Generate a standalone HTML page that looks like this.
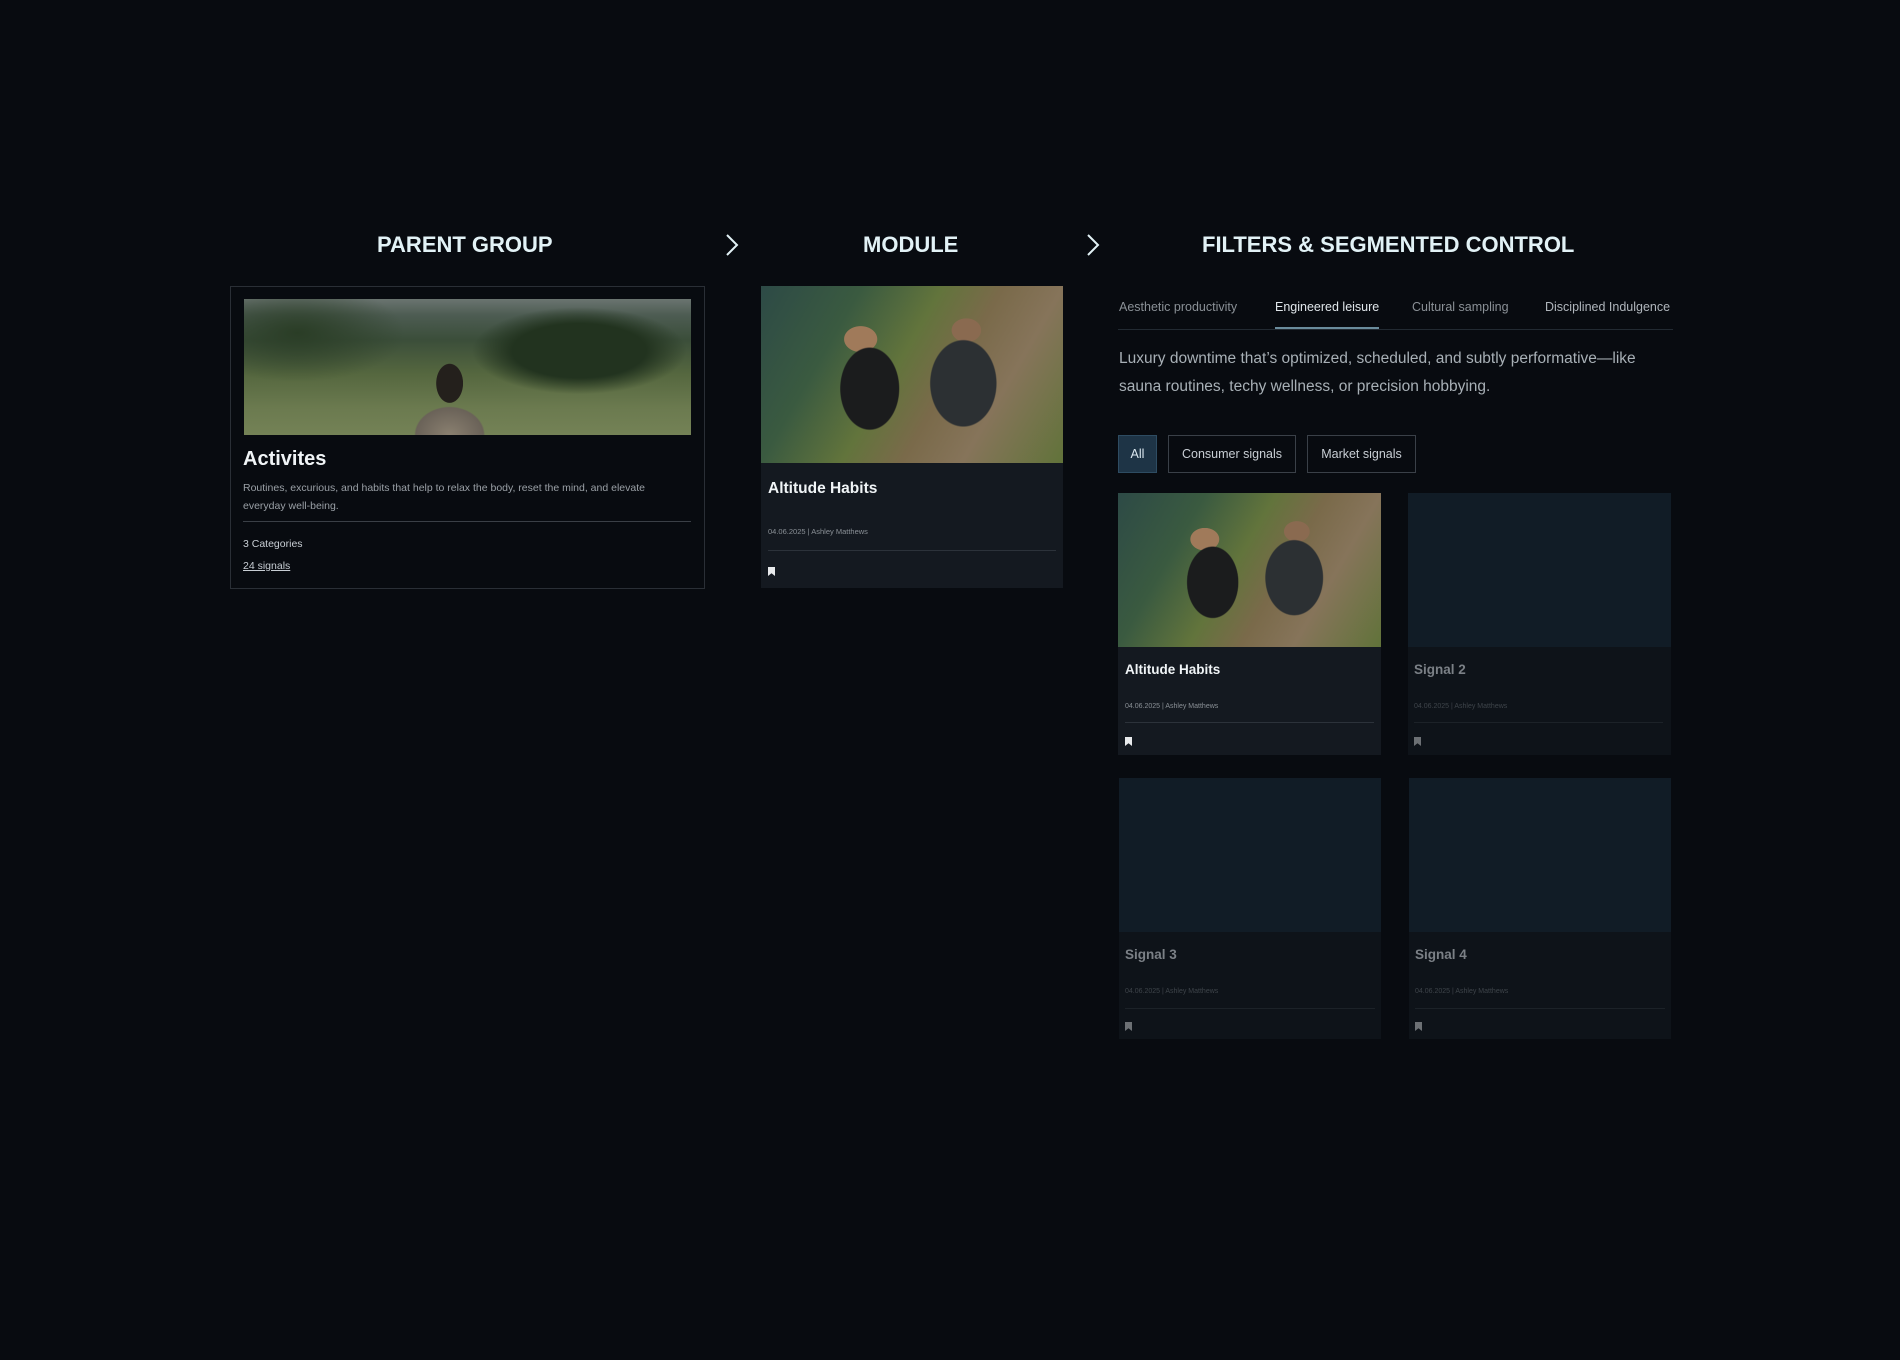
<!DOCTYPE html>
<html><head><meta charset="utf-8"><style>
*{margin:0;padding:0;box-sizing:border-box}
body{width:1900px;height:1360px;background:#080b10;font-family:"Liberation Sans",sans-serif;position:relative;overflow:hidden;color:#e4eef2}
.a{position:absolute}
.h{font-weight:700;font-size:22px;color:#e2f2f6;top:232px;white-space:nowrap}
.chev{width:14px;height:24px}
.land{background:
 radial-gradient(ellipse 22px 32px at 46% 62%,#24201c 0,#24201c 60%,transparent 62%),
 radial-gradient(ellipse 52px 42px at 46% 100%,#8a8070 0,#6a6258 65%,transparent 68%),
 radial-gradient(ellipse 30% 40% at 75% 38%,#22331f 0,#22331f 50%,transparent 80%),
 radial-gradient(ellipse 30% 45% at 12% 25%,#2a3d26 0,transparent 80%),
 linear-gradient(180deg,#6a7470 0,#4d5c52 12%,#3b4e3a 30%,#55673f 55%,#6b7a4f 80%,#748256 100%)}
.run{background:
 radial-gradient(ellipse 16% 38% at 36% 58%,#1b1c1d 0,#1b1c1d 60%,transparent 62%),
 radial-gradient(ellipse 18% 40% at 67% 55%,#2c3033 0,#2c3033 60%,transparent 62%),
 radial-gradient(ellipse 9% 12% at 33% 30%,#a07a5a 0,#a07a5a 60%,transparent 62%),
 radial-gradient(ellipse 8% 11% at 68% 25%,#8a6a50 0,#8a6a50 60%,transparent 62%),
 linear-gradient(120deg,#2d4a46 0,#3a5a40 25%,#62743c 45%,#7a6a4a 60%,#86745a 75%,#61733a 100%)}
.card{background:#141920}
.t{color:#f0f4f6;font-weight:700}
.meta{font-size:7.5px;color:#8a9096}
.bm{width:7px;height:9px;background:#e8eaec;clip-path:polygon(0 0,100% 0,100% 100%,50% 70%,0 100%)}
.ph{background:#111c26}
.fade{color:#7b8086}
.fade .bm{background:#6c7074}
.tab{top:300px;font-size:12.5px;color:#8a9096;white-space:nowrap}
.btn{top:435px;height:38px;border:1px solid #3a4048;font-size:12.5px;color:#c8ced4;display:flex;align-items:center;justify-content:center}
</style></head><body>

<div class="a h" style="left:377px">PARENT GROUP</div>
<svg class="a chev" style="left:725px;top:233px" viewBox="0 0 14 24"><path d="M2 2 L12 12 L2 22" fill="none" stroke="#e2f2f6" stroke-width="2"/></svg>
<div class="a h" style="left:863px">MODULE</div>
<svg class="a chev" style="left:1086px;top:233px" viewBox="0 0 14 24"><path d="M2 2 L12 12 L2 22" fill="none" stroke="#e2f2f6" stroke-width="2"/></svg>
<div class="a h" style="left:1202px">FILTERS &amp; SEGMENTED CONTROL</div>

<!-- Parent card -->
<div class="a" style="left:230px;top:286px;width:475px;height:303px;border:1px solid #2a2f36"></div>
<div class="a land" style="left:244px;top:299px;width:447px;height:136px"></div>
<div class="a t" style="left:243px;top:448px;font-size:20px">Activites</div>
<div class="a" style="left:243px;top:479px;width:440px;font-size:10.5px;line-height:18px;color:#9aa0a6">Routines, excurious, and habits that help to relax the body, reset the mind, and elevate everyday well-being.</div>
<div class="a" style="left:243px;top:521px;width:448px;height:1px;background:#3a3f46"></div>
<div class="a" style="left:243px;top:538px;font-size:10.5px;color:#c8ced4">3 Categories</div>
<div class="a" style="left:243px;top:560px;font-size:10.5px;color:#c8ced4;text-decoration:underline">24 signals</div>

<!-- Module card -->
<div class="a card" style="left:761px;top:286px;width:302px;height:302px"></div>
<div class="a run" style="left:761px;top:286px;width:302px;height:177px"></div>
<div class="a t" style="left:768px;top:480px;font-size:15.5px">Altitude Habits</div>
<div class="a meta" style="left:768px;top:527px">04.06.2025 | Ashley Matthews</div>
<div class="a" style="left:768px;top:550px;width:288px;height:1px;background:#2c323a"></div>
<div class="a bm" style="left:768px;top:567px"></div>

<!-- Tabs -->
<div class="a tab" style="left:1119px">Aesthetic productivity</div>
<div class="a tab" style="left:1275px;color:#e0e6ea">Engineered leisure</div>
<div class="a tab" style="left:1412px">Cultural sampling</div>
<div class="a tab" style="left:1545px;color:#b0b6bc">Disciplined Indulgence</div>
<div class="a" style="left:1118px;top:329px;width:555px;height:1px;background:#222a32"></div>
<div class="a" style="left:1275px;top:327px;width:104px;height:2px;background:#6a8c9c"></div>
<div class="a" style="left:1119px;top:345px;width:560px;font-size:15.5px;line-height:28px;color:#a8b0b6">Luxury downtime that’s optimized, scheduled, and subtly performative—like sauna routines, techy wellness, or precision hobbying.</div>

<div class="a btn" style="left:1118px;width:39px;background:#1e3446;border-color:#2e4c62;color:#dce8f0">All</div>
<div class="a btn" style="left:1168px;width:128px">Consumer signals</div>
<div class="a btn" style="left:1307px;width:109px">Market signals</div>

<!-- Grid -->
<div class="a card" style="left:1118px;top:493px;width:263px;height:262px"></div>
<div class="a run" style="left:1118px;top:493px;width:263px;height:154px"></div>
<div class="a t" style="left:1125px;top:662px;font-size:13.5px">Altitude Habits</div>
<div class="a meta" style="left:1125px;top:703px;font-size:7px">04.06.2025 | Ashley Matthews</div>
<div class="a" style="left:1125px;top:722px;width:249px;height:1px;background:#2c323a"></div>
<div class="a bm" style="left:1125px;top:737px"></div>

<div class="fade">
<div class="a" style="left:1408px;top:493px;width:263px;height:262px;background:#0e1319"></div>
<div class="a ph" style="left:1408px;top:493px;width:263px;height:154px"></div>
<div class="a" style="left:1414px;top:662px;font-size:13.5px;font-weight:700">Signal 2</div>
<div class="a meta" style="left:1414px;top:703px;font-size:7px;color:#3e444a">04.06.2025 | Ashley Matthews</div>
<div class="a" style="left:1414px;top:722px;width:249px;height:1px;background:#1c2228"></div>
<div class="a bm" style="left:1414px;top:737px"></div>

<div class="a" style="left:1119px;top:778px;width:262px;height:261px;background:#0e1319"></div>
<div class="a ph" style="left:1119px;top:778px;width:262px;height:154px"></div>
<div class="a" style="left:1125px;top:947px;font-size:13.5px;font-weight:700">Signal 3</div>
<div class="a meta" style="left:1125px;top:988px;font-size:7px;color:#3e444a">04.06.2025 | Ashley Matthews</div>
<div class="a" style="left:1125px;top:1008px;width:250px;height:1px;background:#1c2228"></div>
<div class="a bm" style="left:1125px;top:1022px"></div>

<div class="a" style="left:1409px;top:778px;width:262px;height:261px;background:#0e1319"></div>
<div class="a ph" style="left:1409px;top:778px;width:262px;height:154px"></div>
<div class="a" style="left:1415px;top:947px;font-size:13.5px;font-weight:700">Signal 4</div>
<div class="a meta" style="left:1415px;top:988px;font-size:7px;color:#3e444a">04.06.2025 | Ashley Matthews</div>
<div class="a" style="left:1415px;top:1008px;width:250px;height:1px;background:#1c2228"></div>
<div class="a bm" style="left:1415px;top:1022px"></div>
</div>
</body></html>
